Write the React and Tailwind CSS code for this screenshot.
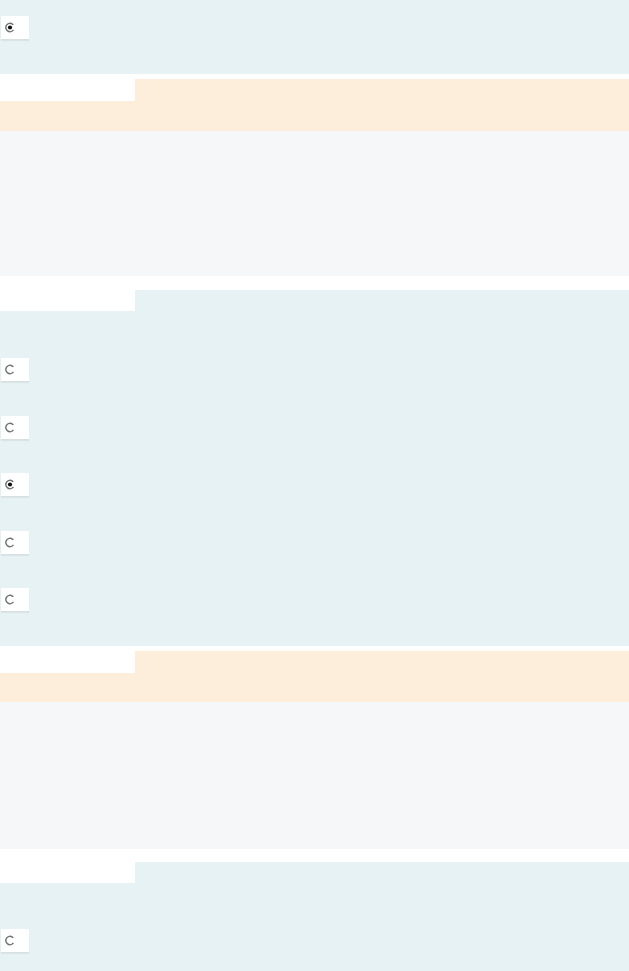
import React from 'react';

// small native-looking radio inside a white chip
function RadioChip({ checked }) {
    return (
        <div className="w-[28px] h-[24px] ml-px bg-white border-b border-[#d9dfe1] shadow-[0_1px_1px_rgba(0,0,0,0.05)] flex items-center pl-[4px]">
            <svg width="11" height="11" viewBox="0 0 11 11">
                <circle cx="5" cy="5.5" r="4.2" fill="none" stroke="#6f6f6f" strokeWidth="1.4" strokeDasharray="20.5 6" transform="rotate(35 5 5.5)" />
                {checked && <circle cx="5" cy="5.5" r="2.1" fill="#111" />}
            </svg>
        </div>
    );
}

// white tab in the top-left corner, colour band to its right
function SectionHead({ gap, tabH, color }) {
    return (
        <div className="flex bg-white">
            <div className="w-[135px] bg-white" style={{ height: tabH }} />
            <div className="flex-1 flex flex-col">
                <div className="bg-white" style={{ height: gap }} />
                <div className={`flex-1 ${color}`} />
            </div>
        </div>
    );
}

export default function App() {
    return (
        <div className="w-[629px] h-[971px] bg-white overflow-hidden">
            {/* top answer block */}
            <div className="h-[74px] bg-[#e6f2f4] pt-[16px]">
                <RadioChip checked />
            </div>

            {/* question 1 */}
            <SectionHead gap={5} tabH={27} color="bg-[#fdeedb]" />
            <div className="h-[30px] bg-[#fdeedb]" />
            <div className="h-[145px] bg-[#f6f7f9]" />

            {/* answers 1 */}
            <SectionHead gap={14} tabH={35} color="bg-[#e6f2f4]" />
            <div className="h-[335px] bg-[#e6f2f4] pt-[47px]">
                <div className="h-[57.5px]"><RadioChip /></div>
                <div className="h-[57.5px]"><RadioChip /></div>
                <div className="h-[57.5px]"><RadioChip checked /></div>
                <div className="h-[57.5px]"><RadioChip /></div>
                <div className="h-[57.5px]"><RadioChip /></div>
            </div>

            {/* question 2 */}
            <SectionHead gap={5} tabH={27} color="bg-[#fdeedb]" />
            <div className="h-[29px] bg-[#fdeedb]" />
            <div className="h-[147px] bg-[#f6f7f9]" />

            {/* answers 2 */}
            <SectionHead gap={13} tabH={34} color="bg-[#e6f2f4]" />
            <div className="h-[120px] bg-[#e6f2f4] pt-[46px]">
                <RadioChip />
            </div>
        </div>
    );
}
